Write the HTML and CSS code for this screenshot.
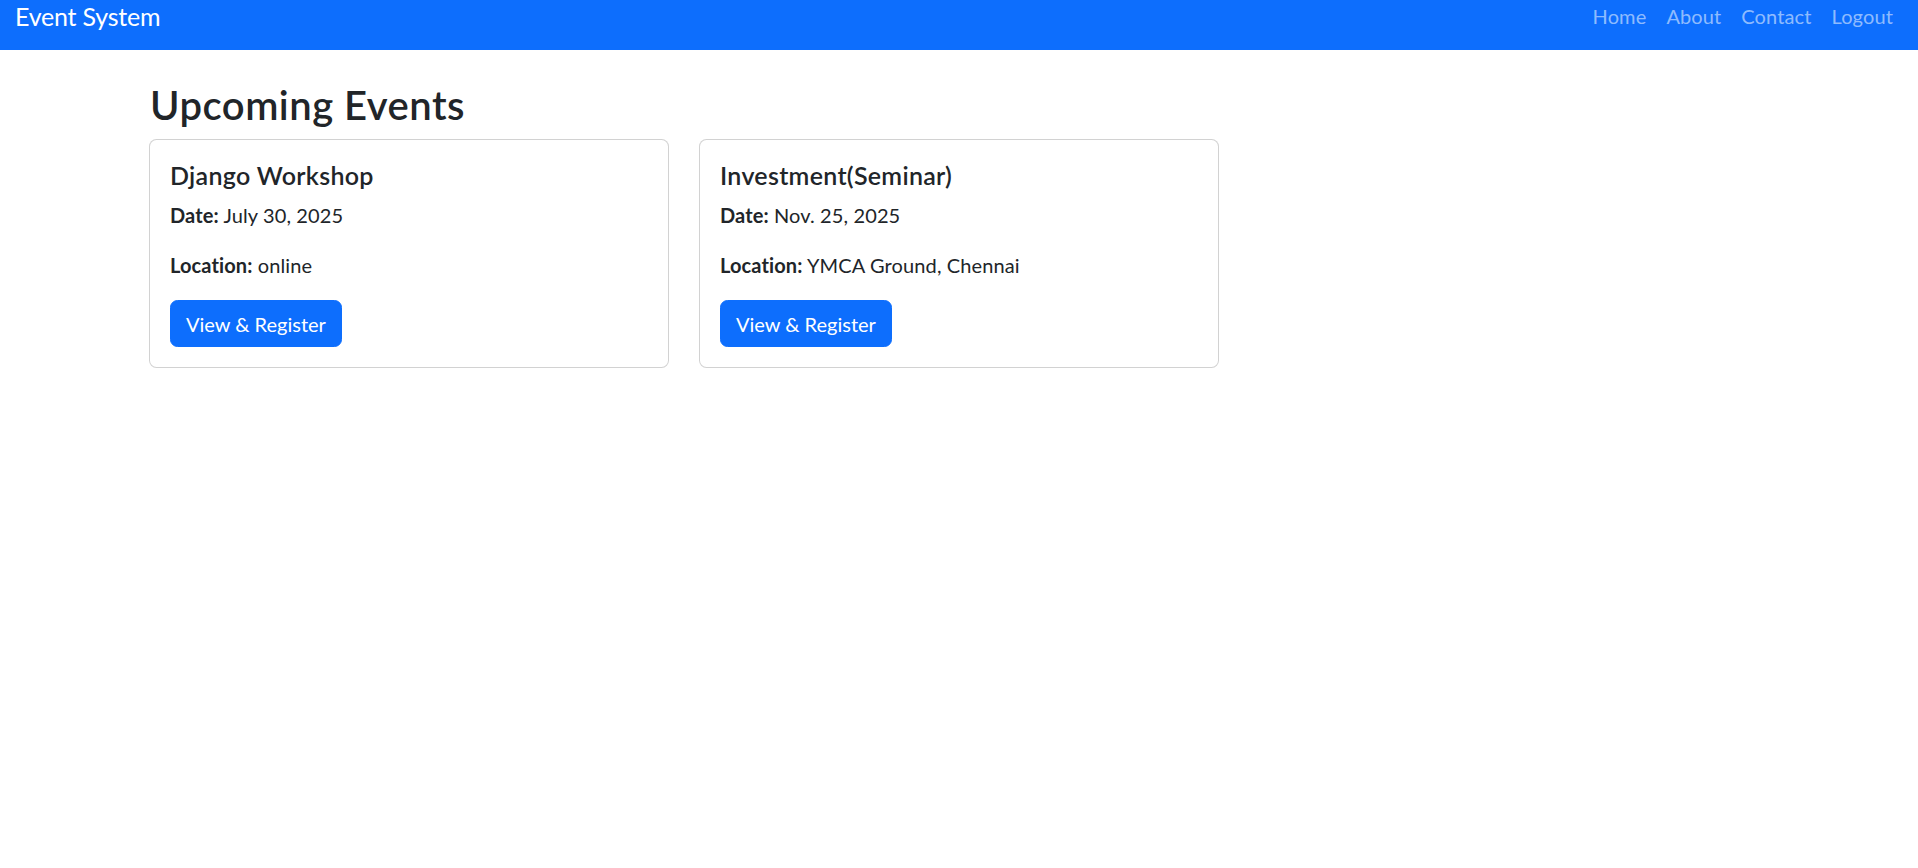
FILE: index.html
```html
<!DOCTYPE html>
<html lang="en">
<head>
<meta charset="utf-8">
<title>Event System</title>
<link rel="stylesheet" href="styles.css">
</head>
<body>
<nav class="navbar">
  <a class="brand" href="#">Event System</a>
  <ul class="nav">
    <li><a class="nav-link" href="#">Home</a></li>
    <li><a class="nav-link" href="#">About</a></li>
    <li><a class="nav-link" href="#">Contact</a></li>
    <li><a class="nav-link" href="#">Logout</a></li>
  </ul>
</nav>
<main class="container">
  <h2 class="page-title">Upcoming Events</h2>
  <div class="cards">
    <div class="card">
      <div class="card-body">
        <h5 class="card-title">Django Workshop</h5>
        <p><strong>Date:</strong> July 30, 2025</p>
        <p><strong>Location:</strong> online</p>
        <a class="btn" href="#">View &amp; Register</a>
      </div>
    </div>
    <div class="card">
      <div class="card-body">
        <h5 class="card-title">Investment(Seminar)</h5>
        <p><strong>Date:</strong> Nov. 25, 2025</p>
        <p><strong>Location:</strong> YMCA Ground, Chennai</p>
        <a class="btn" href="#">View &amp; Register</a>
      </div>
    </div>
  </div>
</main>
</body>
</html>
```
FILE: styles.css
```css
* { box-sizing: border-box; }
html, body { margin: 0; padding: 0; }
body {
  font-family: Lato, "Open Sans", sans-serif;
  font-size: 20px;
  line-height: 1.5;
  color: #212529;
  background: #fff;
  letter-spacing: 0.006em;
}
.navbar {
  height: 50px;
  background: #0d6efd;
  display: flex;
  justify-content: space-between;
  align-items: flex-start;
  padding: 1px 15px 0 15px;
}
.brand {
  color: #fff;
  text-decoration: none;
  font-size: 25px;
  line-height: 30px;
  letter-spacing: -0.008em;
}
.nav {
  list-style: none;
  margin: 0;
  padding: 0;
  display: flex;
}
.nav-link {
  display: block;
  padding: 0 10px;
  font-size: 20px;
  line-height: 30px;
  color: rgba(255, 255, 255, 0.55);
  text-decoration: none;
}
.container {
  padding: 31px 0 0 149px;
}
.page-title {
  margin: 0 0 10px 1px;
  font-size: 40px;
  line-height: 48px;
  font-weight: 600;
  letter-spacing: 0.012em;
}
.cards {
  display: flex;
  gap: 30px;
}
.card {
  width: 520px;
  border: 1px solid rgba(0, 0, 0, 0.175);
  border-radius: 7.5px;
  background: #fff;
}
.card-body {
  padding: 20px;
}
.card-title {
  margin: 0 0 10px;
  font-size: 25px;
  line-height: 30px;
  font-weight: 600;
  letter-spacing: 0.012em;
}
.card-body p {
  margin: 0 0 20px;
}
.card-body strong { font-weight: 700; }
.btn {
  display: inline-block;
  padding: 7.5px 15px;
  border: 1px solid #0d6efd;
  border-radius: 7.5px;
  background: #0d6efd;
  color: #fff;
  text-decoration: none;
  font-size: 20px;
  line-height: 30px;
  letter-spacing: 0;
}
```
